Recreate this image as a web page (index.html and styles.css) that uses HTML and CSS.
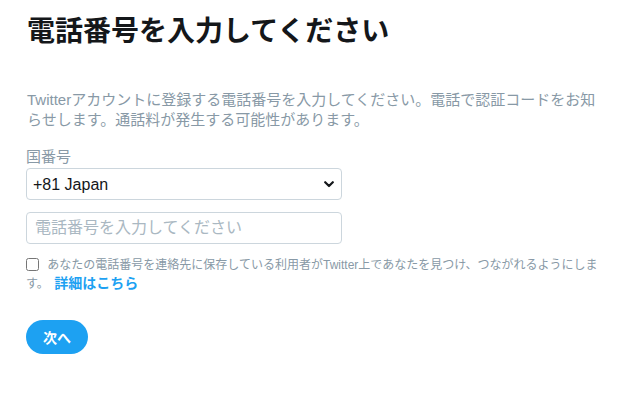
FILE: index.html
```html
<!DOCTYPE html>
<html lang="ja">
<head>
    <meta charset="UTF-8">
    <meta name="viewport" content="width=device-width, initial-scale=1.0">
    <title>電話番号を入力してください</title>
    <link rel="stylesheet" href="styles.css">
</head>
<body>
    <div class="container">
        <h1 class="title">電話番号を入力してください</h1>

        <p class="intro">Twitterアカウントに登録する電話番号を入力してください。電話で認証コードをお知らせします。通話料が発生する可能性があります。</p>

        <label class="field-label" for="countryCode">国番号</label>
        <div class="select-wrap">
            <select id="countryCode" class="country-select">
                <option>+81 Japan</option>
            </select>
            <svg class="chevron" width="10" height="7" viewBox="0 0 10 7">
                <path d="M1.2 1.2 L5 5 L8.8 1.2" fill="none" stroke="#14171a" stroke-width="2.2" stroke-linecap="round" stroke-linejoin="round"/>
            </svg>
        </div>

        <input type="tel" class="phone-input" placeholder="電話番号を入力してください">

        <div class="discover">
            <input type="checkbox" id="discoverable" class="discover-box">
            <label for="discoverable">あなたの電話番号を連絡先に保存している利用者がTwitter上であなたを見つけ、つながれるようにします。</label>
            <a href="#" class="more-link">詳細はこちら</a>
        </div>

        <button class="next-btn">次へ</button>
    </div>
</body>
</html>
```

FILE: styles.css
```css
* {
    box-sizing: border-box;
    margin: 0;
    padding: 0;
}
body {
    font-family: "Liberation Sans", "Noto Sans CJK JP", sans-serif;
    background-color: #fff;
    color: #14171a;
}
.container {
    width: 637px;
    padding: 14px 32px 0 27px;
}
.title {
    font-size: 28px;
    line-height: 36px;
    font-weight: bold;
    color: #14171a;
}
.intro {
    margin-top: 40px;
    font-size: 15px;
    line-height: 20px;
    color: #8899a6;
}
.field-label {
    display: block;
    margin-top: 17px;
    margin-left: -1px;
    font-size: 15px;
    line-height: 20px;
    color: #8899a6;
}
.select-wrap {
    position: relative;
    width: 316px;
    margin-top: 1px;
    margin-left: -1px;
}
.country-select {
    display: block;
    width: 100%;
    height: 32px;
    padding: 0 24px 0 6px;
    font-family: "Liberation Sans", "Noto Sans CJK JP", sans-serif;
    font-size: 16px;
    color: #14171a;
    background-color: #fff;
    border: 1px solid #ccd6dd;
    border-radius: 4px;
    appearance: none;
    -webkit-appearance: none;
}
.chevron {
    position: absolute;
    right: 8px;
    top: 13px;
}
.phone-input {
    display: block;
    width: 316px;
    height: 32px;
    margin-top: 12px;
    margin-left: -1px;
    padding: 0 8px;
    font-family: "Liberation Sans", "Noto Sans CJK JP", sans-serif;
    font-size: 16px;
    color: #14171a;
    border: 1px solid #ccd6dd;
    border-radius: 4px;
}
.phone-input::placeholder {
    color: #aab8c2;
}
.discover {
    margin-top: 12px;
    margin-left: -1px;
    font-size: 12px;
    line-height: 18px;
    color: #8899a6;
}
.discover-box {
    width: 13px;
    height: 13px;
    margin: 0 5px 0 0;
    vertical-align: -2px;
}
.more-link {
    margin-left: 2px;
    font-size: 14px;
    line-height: 18px;
    font-weight: bold;
    color: #1da1f2;
    text-decoration: none;
}
.next-btn {
    display: block;
    width: 62px;
    height: 34px;
    margin-top: 27px;
    margin-left: -1px;
    font-family: "Liberation Sans", "Noto Sans CJK JP", sans-serif;
    font-size: 14px;
    font-weight: bold;
    color: #fff;
    background-color: #1da1f2;
    border: none;
    border-radius: 17px;
    cursor: pointer;
}
```
